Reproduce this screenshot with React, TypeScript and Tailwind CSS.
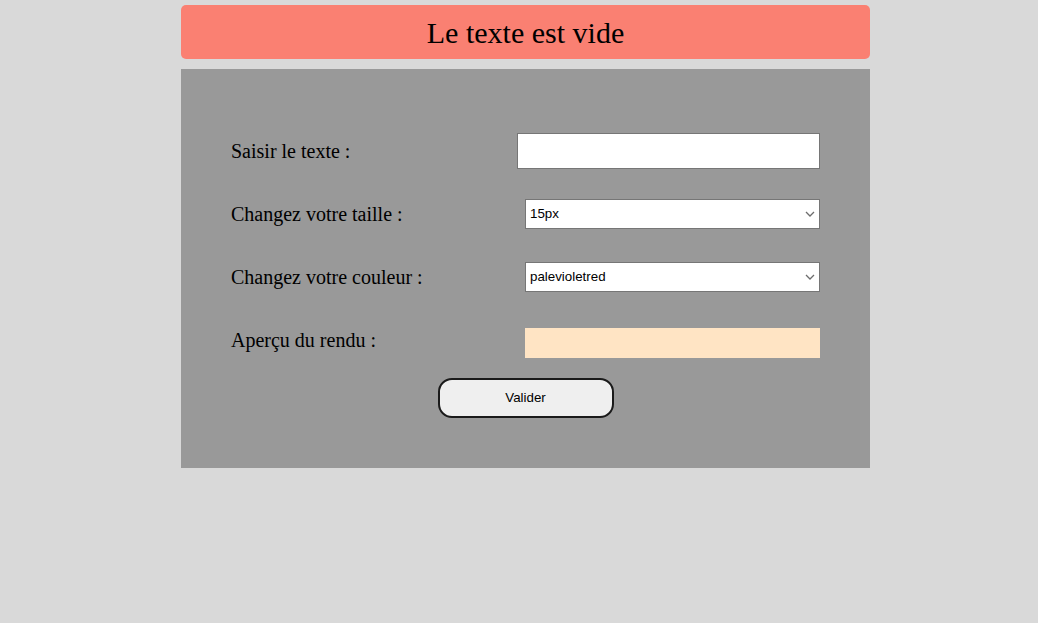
import { useState } from 'react'

const serif = "font-['Liberation_Serif','Times_New_Roman',serif]"
const sans = "font-['Liberation_Sans',Arial,sans-serif]"

function Chevron() {
  return (
    <svg
      className="pointer-events-none absolute right-[5px] top-1/2 -translate-y-1/2"
      width="10"
      height="6"
      viewBox="0 0 10 6"
      fill="none"
    >
      <path d="M1 1l4 4 4-4" stroke="#6d6d6d" strokeWidth="1.3" />
    </svg>
  )
}

export default function App() {
  const [text, setText] = useState('')
  const [size, setSize] = useState('15px')
  const [color, setColor] = useState('palevioletred')

  return (
    <div className="min-h-[623px] bg-[#d9d9d9] pt-[5px]">
      <div className="ml-[181px] w-[689px]">
        <div className={`flex h-[54px] items-center justify-center rounded-[5px] bg-[#fa8072] text-[30px] text-black ${serif}`}>
          Le texte est vide
        </div>

        <div className="mt-[10px] bg-[#999999] px-[50px] pb-[50px] pt-[50px]">
          <div className="flex h-[63px] items-center justify-between">
            <label className={`text-[20px] text-black ${serif}`}>Saisir le texte :</label>
            <input
              value={text}
              onChange={(e) => setText(e.target.value)}
              className={`h-[36px] w-[303px] border border-[#767676] bg-white px-1 text-[13px] ${sans}`}
            />
          </div>

          <div className="flex h-[63px] items-center justify-between">
            <label className={`text-[20px] text-black ${serif}`}>Changez votre taille :</label>
            <div className="relative">
              <select
                value={size}
                onChange={(e) => setSize(e.target.value)}
                className={`h-[30px] w-[295px] appearance-none border border-[#767676] bg-white pl-[4px] text-[13.33px] text-black ${sans}`}
              >
                <option>15px</option>
                <option>20px</option>
                <option>25px</option>
                <option>30px</option>
              </select>
              <Chevron />
            </div>
          </div>

          <div className="flex h-[63px] items-center justify-between">
            <label className={`text-[20px] text-black ${serif}`}>Changez votre couleur :</label>
            <div className="relative">
              <select
                value={color}
                onChange={(e) => setColor(e.target.value)}
                className={`h-[30px] w-[295px] appearance-none border border-[#767676] bg-white pl-[4px] text-[13.33px] text-black ${sans}`}
              >
                <option>palevioletred</option>
                <option>steelblue</option>
                <option>seagreen</option>
              </select>
              <Chevron />
            </div>
          </div>

          <div className="flex h-[63px] items-center justify-between">
            <label className={`text-[20px] text-black ${serif}`}>Aperçu du rendu :</label>
            <div className="mt-[6px] h-[30px] w-[295px] bg-[#ffe4c4]" style={{ color, fontSize: size }}>
              {text}
            </div>
          </div>

          <div className="mt-[7px] flex justify-center">
            <button
              className={`h-[40px] w-[176px] rounded-[14px] border-2 border-[#1a1a1a] bg-[#efefef] text-[13.33px] text-black ${sans}`}
            >
              Valider
            </button>
          </div>
        </div>
      </div>
    </div>
  )
}
